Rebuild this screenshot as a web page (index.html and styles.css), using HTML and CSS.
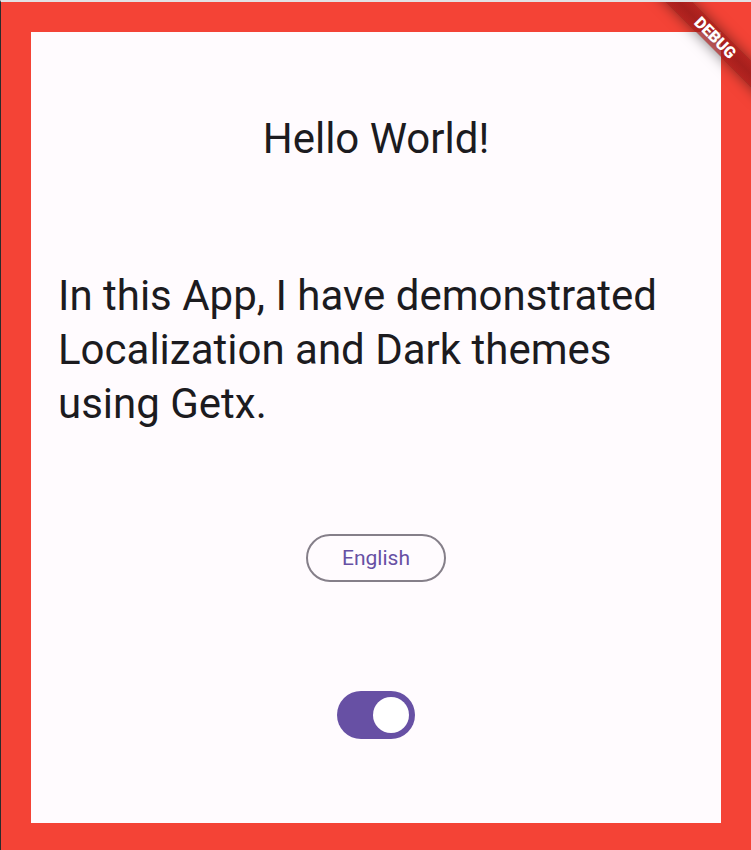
FILE: index.html
```html
<!DOCTYPE html>
<html lang="en">
<head>
<meta charset="utf-8">
<meta name="viewport" content="width=device-width, initial-scale=1">
<title>Hello World!</title>
<link rel="stylesheet" href="styles.css">
</head>
<body>
<div class="app">
  <main class="screen">
    <h1 class="title">Hello World!</h1>
    <p class="intro">In this App, I have demonstrated Localization and Dark themes using Getx.</p>
    <button class="language" type="button">English</button>
    <input class="switch" type="checkbox" role="switch" aria-label="Dark theme" checked>
  </main>
  <div class="banner">DEBUG</div>
</div>
</body>
</html>
```

FILE: styles.css
```css
* {
  box-sizing: border-box;
}

body {
  margin: 0;
  min-height: 100vh;
  display: flex;
  border-top: 2px solid #e2e2e4;
  border-left: 1px solid #2b2b2b;
  font-family: Roboto, "Liberation Sans", sans-serif;
  color: #1c1b1f;
}

.app {
  flex: 1;
  display: flex;
  position: relative;
  overflow: hidden;
}

.screen {
  flex: 1;
  display: flex;
  flex-direction: column;
  align-items: center;
  justify-content: center;
  gap: 103px;
  padding: 1px 27px 0;
  border: 30px solid #f44336;
  border-bottom-width: 27px;
  background: #fffbfe;
}

.title,
.intro {
  margin: 0;
  font-size: 42px;
  line-height: 54px;
  font-weight: 400;
}

.language {
  height: 48px;
  padding: 0 34px;
  border: 2px solid #857f89;
  border-radius: 24px;
  background: transparent;
  color: #6750a4;
  font: 400 21px/30px Roboto, "Liberation Sans", sans-serif;
}

.switch {
  appearance: none;
  display: flex;
  align-items: center;
  justify-content: flex-end;
  width: 78px;
  height: 48px;
  margin: 6px 0;
  padding: 6px;
  border-radius: 24px;
  background: #6750a4;
}

.switch::before {
  content: "";
  width: 36px;
  height: 36px;
  border-radius: 50%;
  background: #fff;
}

.switch:not(:checked) {
  justify-content: flex-start;
}

/* Translucent ribbon laid over its own soft shadow */
.banner {
  position: absolute;
  top: 27px;
  right: -44px;
  width: 160px;
  height: 18px;
  transform: rotate(45deg);
  background:
    linear-gradient(rgba(183, 28, 28, 0.63), rgba(183, 28, 28, 0.63)),
    linear-gradient(rgba(0, 0, 0, 0.28), rgba(0, 0, 0, 0.44), rgba(0, 0, 0, 0.28));
  box-shadow: 0 0 14px rgba(0, 0, 0, 0.5);
  color: #fff;
  font-size: 16px;
  line-height: 18px;
  font-weight: 900;
  text-align: center;
}
```
